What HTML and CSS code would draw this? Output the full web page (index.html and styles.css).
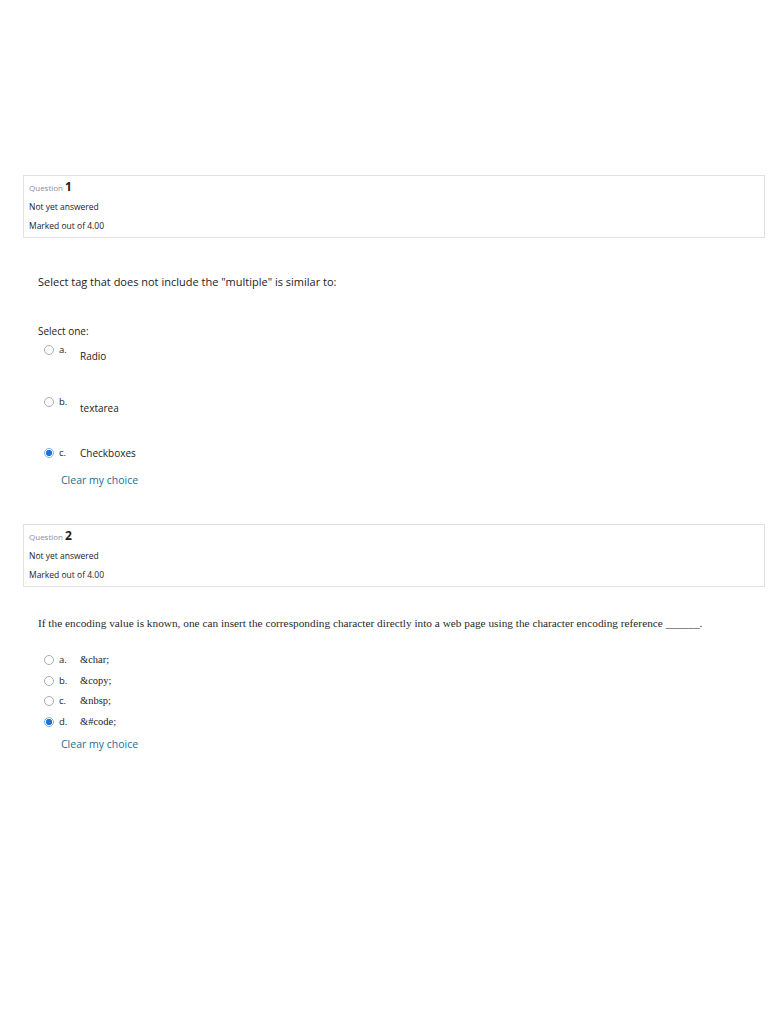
FILE: index.html
```html
<!DOCTYPE html>
<html lang="en">
<head>
  <meta charset="UTF-8" />
  <title>Quiz</title>
  <link rel="stylesheet" href="styles.css">
</head>
<body>

  <!-- Question 1 -->
  <div class="que que-first">
    <div class="info">
      <h3 class="no">Question <span class="qno">1</span></h3>
      <div class="state">Not yet answered</div>
      <div class="grade">Marked out of 4.00</div>
    </div>
    <div class="content">
      <p class="qtext">Select tag that does not include the "multiple" is similar to:</p>
      <div class="prompt">Select one:</div>
      <div class="answer answer-tall">
        <div class="opt opt-a">
          <span class="radio"></span><span class="letter">a.</span><span class="label low">Radio</span>
        </div>
        <div class="opt opt-b">
          <span class="radio"></span><span class="letter">b.</span><span class="label low">textarea</span>
        </div>
        <div class="opt opt-c">
          <span class="radio checked"></span><span class="letter">c.</span><span class="label">Checkboxes</span>
        </div>
      </div>
      <a class="clear" href="#">Clear my choice</a>
    </div>
  </div>

  <!-- Question 2 -->
  <div class="que que-second">
    <div class="info">
      <h3 class="no">Question <span class="qno">2</span></h3>
      <div class="state">Not yet answered</div>
      <div class="grade">Marked out of 4.00</div>
    </div>
    <div class="content">
      <p class="qtext serif">If the encoding value is known, one can insert the corresponding character directly into a web page using the character encoding reference ______.</p>
      <div class="answer answer-tight">
        <div class="opt">
          <span class="radio"></span><span class="letter">a.</span><span class="label serif">&amp;char;</span>
        </div>
        <div class="opt">
          <span class="radio"></span><span class="letter">b.</span><span class="label serif">&amp;copy;</span>
        </div>
        <div class="opt">
          <span class="radio"></span><span class="letter">c.</span><span class="label serif">&amp;nbsp;</span>
        </div>
        <div class="opt">
          <span class="radio checked"></span><span class="letter">d.</span><span class="label serif">&amp;#code;</span>
        </div>
      </div>
      <a class="clear clear-tight" href="#">Clear my choice</a>
    </div>
  </div>

</body>
</html>
```

FILE: styles.css
```css
body {
  margin: 0;
  padding: 175px 3px 0 23px;
  font-family: 'Open Sans', 'Noto Sans', sans-serif;
  color: #1d2125;
  background: #ffffff;
}

.que-second {
  margin-top: 36px;
}

.info {
  border: 1px solid #dee2e6;
  background: #ffffff;
  padding: 2px 5px 5px;
  height: 54px;
}

.no {
  margin: 0;
  font-size: 8px;
  font-weight: normal;
  color: #8a8f94;
  line-height: 18px;
}

.qno {
  font-size: 12px;
  font-weight: bold;
  color: #1d2125;
}

.state, .grade {
  font-size: 8.5px;
  line-height: 19px;
  color: #1d2125;
}

.content {
  padding-left: 15px;
}

.qtext {
  margin: 36px 0 0;
  font-size: 11px;
  line-height: 16px;
}

.qtext.serif {
  margin-top: 28px;
  font-size: 11.3px;
  color: #2a2a2a;
}

.serif {
  font-family: 'Liberation Serif', serif;
}

.prompt {
  margin-top: 34px;
  font-size: 10px;
  line-height: 14px;
}

.answer {
  padding-left: 6px;
}

.opt {
  display: flex;
  align-items: flex-start;
  font-size: 10px;
  line-height: 14px;
}

.answer-tall .opt-a {
  margin-top: 5px;
  height: 52px;
}

.answer-tall .opt-b {
  height: 51px;
}

.answer-tall .opt-c {
  height: 22px;
}

.answer-tight {
  margin-top: 22px;
}

.answer-tight .opt {
  height: 20.7px;
}

.radio {
  width: 10px;
  height: 10px;
  border: 1px solid #a8adb2;
  border-radius: 50%;
  box-sizing: border-box;
  margin-top: 2px;
  margin-right: 5px;
  flex-shrink: 0;
}

.radio.checked {
  border: 1px solid #7fb0e0;
  background: radial-gradient(circle, #1a73d9 0 2.8px, #ffffff 3.4px);
}

.letter {
  width: 21px;
  font-size: 9.5px;
  color: #1d2125;
}

.label.low {
  padding-top: 6px;
}

.label.serif {
  font-size: 10.5px;
}

.clear {
  display: block;
  margin-top: 4px;
  margin-left: 23px;
  font-size: 10.5px;
  line-height: 16px;
  color: #1a6e95;
  text-decoration: none;
}

.clear.clear-tight {
  margin-top: 0;
}
```
